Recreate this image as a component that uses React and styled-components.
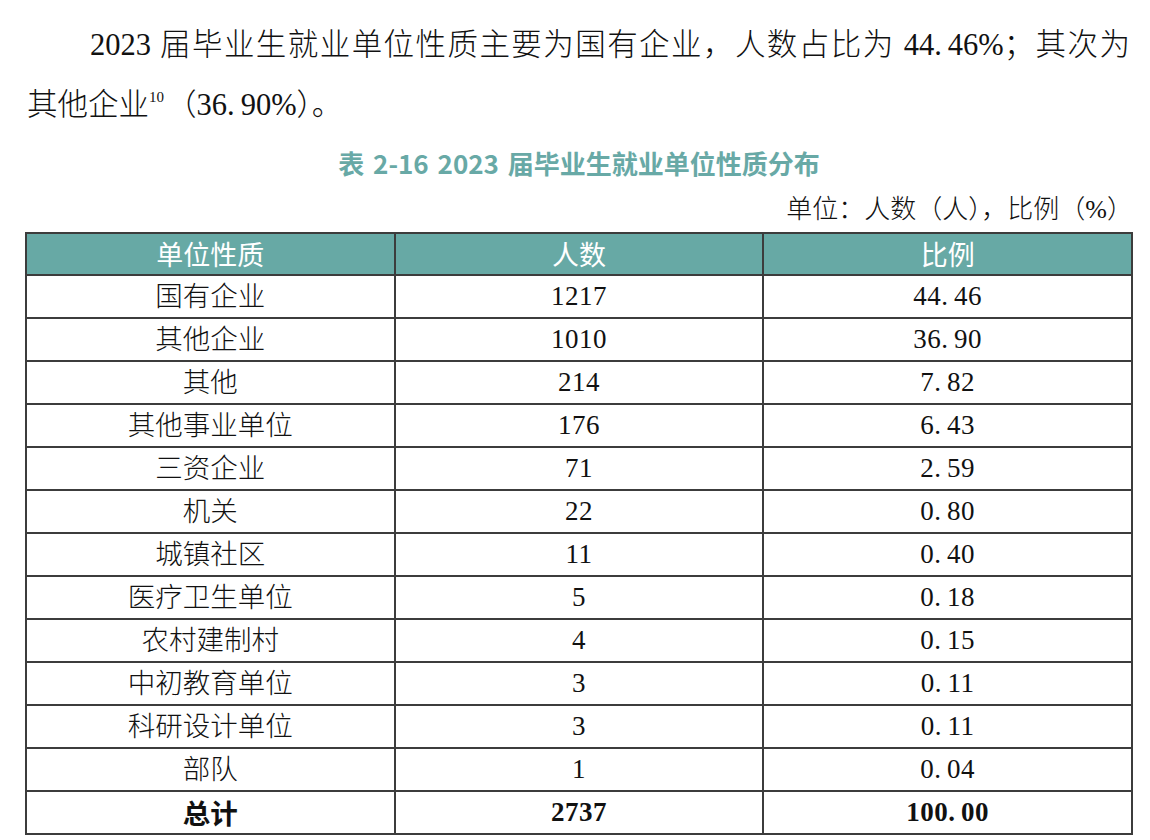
import React from "react";
import styled, { createGlobalStyle } from "styled-components";

const GlobalStyle = createGlobalStyle`
  html, body { margin: 0; padding: 0; background: #ffffff; }
  body { font-family: "Liberation Serif", "Noto Sans CJK SC", serif; color: #000; }
`;

const Page = styled.div`
  width: 1150px;
  box-sizing: border-box;
  padding: 15px 17px 0 25px;
  display: flex;
  flex-direction: column;
`;

const Paragraph = styled.div`
  margin: 0 3px 0 2px;
  font-family: "Liberation Serif", "Noto Sans CJK SC", serif;
  font-size: 30.5px;
  font-weight: 300;
  line-height: 60px;
  color: #111;
`;

const Line = styled.div`
  text-indent: ${(p) => (p.$indent ? "63px" : "0")};
  text-align: ${(p) => (p.$justify ? "justify" : "left")};
  text-align-last: ${(p) => (p.$justify ? "justify" : "auto")};
  white-space: nowrap;
`;

const Sup = styled.sup`
  font-size: 15px;
  line-height: 0;
  vertical-align: 13px;
  margin-right: 2px;
`;

const Dot = styled.span`
  letter-spacing: 6px;
`;

const Caption = styled.div`
  margin-top: 10px;
  text-align: center;
  font-family: "Noto Sans CJK SC", sans-serif;
  font-weight: 700;
  font-size: 26px;
  line-height: 36px;
  color: #68a9a6;
  word-spacing: 3px;
`;

const Unit = styled.div`
  margin-top: 11px;
  margin-right: 0;
  text-align: right;
  font-family: "Liberation Serif", "Noto Sans CJK SC", serif;
  font-weight: 300;
  font-size: 26px;
  line-height: 36px;
  color: #111;
`;

const Table = styled.table`
  margin-top: 4px;
  width: 1108px;
  border-collapse: collapse;
  table-layout: fixed;
  border: 2px solid #3c3c3c;
`;

const HeadCell = styled.th`
  height: 40px;
  padding: 0;
  background: #67a9a5;
  color: #ffffff;
  border: 2px solid #3c3c3c;
  font-family: "Noto Sans CJK SC", sans-serif;
  font-weight: 400;
  font-size: 27px;
  line-height: 40px;
  text-align: center;
`;

const Cell = styled.td`
  height: 41px;
  padding: 0;
  border: 2px solid #3c3c3c;
  text-align: center;
  font-family: ${(p) =>
    p.$bold ? '"Noto Sans CJK SC", sans-serif' : '"Liberation Serif", "Noto Sans CJK SC", serif'};
  font-weight: ${(p) => (p.$bold ? 700 : 300)};
  font-size: 27.5px;
  line-height: 41px;
  color: #111;
`;

const NumCell = styled(Cell)`
  font-family: "Liberation Serif", serif;
  font-weight: ${(p) => (p.$bold ? 700 : 400)};
  font-size: 27px;
  letter-spacing: 0.5px;
`;

const rows = [
  ["国有企业", "1217", "44.46"],
  ["其他企业", "1010", "36.90"],
  ["其他", "214", "7.82"],
  ["其他事业单位", "176", "6.43"],
  ["三资企业", "71", "2.59"],
  ["机关", "22", "0.80"],
  ["城镇社区", "11", "0.40"],
  ["医疗卫生单位", "5", "0.18"],
  ["农村建制村", "4", "0.15"],
  ["中初教育单位", "3", "0.11"],
  ["科研设计单位", "3", "0.11"],
  ["部队", "1", "0.04"],
];

const splitDot = (value) => {
  const i = value.indexOf(".");
  if (i < 0) return value;
  return (
    <>
      {value.slice(0, i)}
      <Dot>.</Dot>
      {value.slice(i + 1)}
    </>
  );
};

export default function App() {
  return (
    <>
      <GlobalStyle />
      <Page>
        <Paragraph>
          <Line $indent $justify>
            2023 届毕业生就业单位性质主要为国有企业，人数占比为 44<Dot>.</Dot>46%；其次为
          </Line>
          <Line>
            其他企业<Sup>10</Sup>（36<Dot>.</Dot>90%）。
          </Line>
        </Paragraph>
        <Caption>表 2-16 2023 届毕业生就业单位性质分布</Caption>
        <Unit>单位：人数（人），比例（%）</Unit>
        <Table>
          <thead>
            <tr>
              <HeadCell>单位性质</HeadCell>
              <HeadCell>人数</HeadCell>
              <HeadCell>比例</HeadCell>
            </tr>
          </thead>
          <tbody>
            {rows.map(([name, count, pct]) => (
              <tr key={name + count}>
                <Cell>{name}</Cell>
                <NumCell>{count}</NumCell>
                <NumCell>{splitDot(pct)}</NumCell>
              </tr>
            ))}
            <tr>
              <Cell $bold>总计</Cell>
              <NumCell $bold>2737</NumCell>
              <NumCell $bold>{splitDot("100.00")}</NumCell>
            </tr>
          </tbody>
        </Table>
      </Page>
    </>
  );
}
